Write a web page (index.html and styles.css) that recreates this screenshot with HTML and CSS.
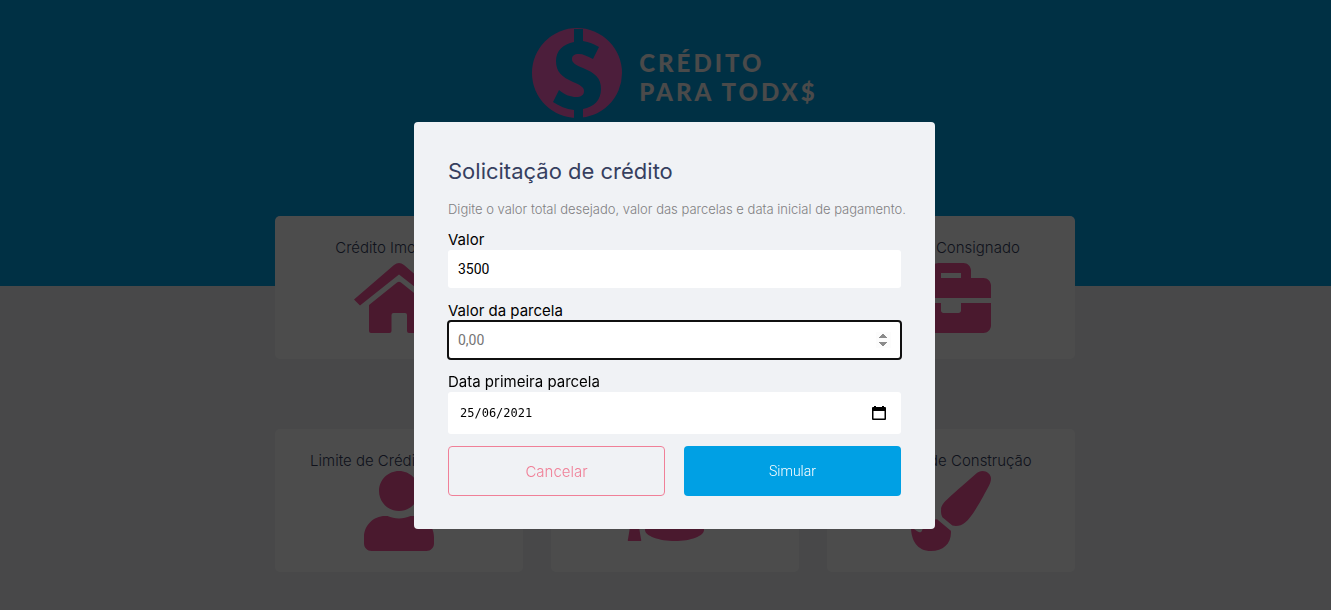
FILE: index.html
```html
<!DOCTYPE html>
<html lang="pt-BR">
<head>
<meta charset="utf-8">
<meta name="viewport" content="width=device-width, initial-scale=1">
<title>Crédito para Todxs</title>
<link rel="stylesheet" href="styles.css">
</head>
<body>
<header class="header">
  <div class="logo">
    <svg class="logo-mark" viewBox="0 0 92 92" aria-hidden="true">
      <circle cx="46" cy="46" r="45"/>
      <path class="logo-cut" d="M43 2h9v12c6 1 11 3 16 6l-6 12c-6-3-10-5-14-5-5 0-7 2-7 5 0 4 4 6 11 9 12 5 18 10 18 21 0 11-7 18-18 20v12h-9v-11c-8-1-15-4-21-8l6-12c6 5 12 7 17 7 5 0 8-2 8-6s-4-6-11-9c-11-5-17-10-17-21 0-10 7-17 18-19z"/>
    </svg>
    <p class="logo-text">CRÉDITO<br>PARA TODX$</p>
  </div>
</header>
<main class="cards">
  <section class="card">
    <h2 class="card-title">Crédito Imobiliário</h2>
    <svg class="card-icon" viewBox="0 0 90 80" aria-hidden="true"><path d="M0 41.500 40 7q5-4 10 0L90 41.500 84.500 47.500 45 16.500 6 47.500zM15 47 43 24.500q2-1.500 4 0L75 47v26q0 2-2 2H55q-2 0-2-2V57q0-2-2-2H39.500q-2 0-2 2v16q0 2-2 2H17q-2 0-2-2z"/></svg>
  </section>
  <section class="card">
    <h2 class="card-title">Crédito Veículo</h2>
  </section>
  <section class="card">
    <h2 class="card-title">Crédito Consignado</h2>
    <svg class="card-icon" viewBox="0 0 512 512" aria-hidden="true"><path d="M320 336c0 8.840-7.160 16-16 16h-96c-8.840 0-16-7.160-16-16v-48H0v144c0 25.600 22.400 48 48 48h416c25.600 0 48-22.400 48-48V288H320v48zm144-208h-80V80c0-25.600-22.400-48-48-48H176c-25.600 0-48 22.400-48 48v48H48c-25.600 0-48 22.400-48 48v80h512v-80c0-25.600-22.400-48-48-48zm-144 0H192V96h128v32z"/></svg>
  </section>
  <section class="card">
    <h2 class="card-title">Limite de Crédito Pessoal</h2>
    <svg class="card-icon" viewBox="0 0 448 512" aria-hidden="true"><path d="M224 256c70.700 0 128-57.300 128-128S294.700 0 224 0 96 57.300 96 128s57.300 128 128 128zm89.600 32h-16.700c-22.200 10.200-46.900 16-72.900 16s-50.600-5.800-72.900-16h-16.700C60.200 288 0 348.200 0 422.400V464c0 26.500 21.500 48 48 48h352c26.500 0 48-21.500 48-48v-41.600c0-74.200-60.200-134.400-134.400-134.400z"/></svg>
  </section>
  <section class="card">
    <h2 class="card-title">Crédito Estudantil</h2>
    <svg class="card-icon" viewBox="0 0 100 80" aria-hidden="true"><path d="M6 50h7l3 18q1 2-1 2H4q-2 0-1-2zM22 40h57v19c0 6-13 11-29 11S20 65 20 59z"/></svg>
  </section>
  <section class="card">
    <h2 class="card-title">Material de Construção</h2>
    <svg class="card-icon" viewBox="0 0 512 512" aria-hidden="true"><path d="M167.020 309.340c-40.120 2.580-76.530 17.860-97.190 72.300-2.350 6.210-8 9.980-14.590 9.980-11.110 0-45.460-27.670-55.250-34.350C0 439.620 37.930 512 128 512c75.860 0 128-43.770 128-120.190 0-3.110-.65-6.080-.97-9.130l-88.010-73.340zM457.890 0c-15.160 0-29.370 6.710-40.210 16.450C213.270 199.050 192 203.340 192 257.090c0 13.700 3.250 26.760 8.730 38.700l63.820 53.180c7.210 1.800 14.640 3.030 22.390 3.030 62.110 0 98.110-45.470 211.160-256.460 7.380-14.350 13.900-29.850 13.900-45.990C512 20.640 486 0 457.890 0z"/></svg>
  </section>
</main>
<div class="overlay">
  <form class="modal" role="dialog" aria-labelledby="modal-title">
    <h1 class="modal-title" id="modal-title">Solicitação de crédito</h1>
    <p class="modal-text">Digite o valor total desejado, valor das parcelas e data inicial de pagamento.</p>
    <div class="field">
      <label for="valor">Valor</label>
      <input class="input" id="valor" type="number" value="3500">
    </div>
    <div class="field">
      <label for="parcela">Valor da parcela</label>
      <input class="input input-spin" id="parcela" type="number" placeholder="0,00" autofocus>
    </div>
    <div class="field">
      <label for="data">Data primeira parcela</label>
      <div class="date">
        <input class="date-input" id="data" type="text" inputmode="numeric" value="25/06/2021">
        <button class="date-button" type="button" aria-label="Abrir calendário">
          <svg viewBox="0 0 14 15" aria-hidden="true"><path d="M2 0h2v1h6V0h2v1h1q1 0 1 1v11q0 1-1 1H1q-1 0-1-1V2q0-1 1-1h1zM1.500 5v7.500h11V5z"/></svg>
        </button>
      </div>
    </div>
    <div class="actions">
      <button class="button button-cancel" type="button">Cancelar</button>
      <button class="button button-submit" type="submit">Simular</button>
    </div>
  </form>
</div>
</body>
</html>
```
FILE: styles.css
```css
:root {
  --blue: #00a0e4;
  --surface: #f0f2f5;
  --pink: #f7559b;
  --title: #363f5f;
  --page-offset: 18px;
}

* {
  margin: 0;
  padding: 0;
  box-sizing: border-box;
}

body {
  height: 100vh;
  overflow: hidden;
  background: var(--surface);
  font-family: Inter, "Open Sans", sans-serif;
  font-size: 15px;
}

.header {
  height: 286px;
  padding: 27px 0 0 var(--page-offset);
  background: var(--blue);
}

.logo {
  display: flex;
  justify-content: center;
  align-items: center;
  gap: 16px;
}

.logo-mark {
  width: 92px;
  height: 92px;
  fill: #fd67c5;
}

.logo-cut {
  fill: var(--blue);
}

.logo-text {
  margin-top: 8px;
  color: #f7f7f7;
  font-family: Lato, sans-serif;
  font-size: 24px;
  font-weight: 900;
  line-height: 29px;
  letter-spacing: 3px;
}

.cards {
  display: grid;
  grid-template-columns: repeat(3, minmax(0, 248px));
  justify-content: center;
  gap: 70px 28px;
  margin-top: -70px;
  padding-left: var(--page-offset);
}

.card {
  display: flex;
  flex-direction: column;
  align-items: center;
  min-height: 143px;
  padding: 21px 0;
  border-radius: 5px;
  background: #fff;
}

.card-title {
  color: var(--title);
  font-size: 15px;
  font-weight: 300;
  line-height: 21px;
}

.card-icon {
  height: 80px;
  fill: var(--pink);
}

.overlay {
  position: fixed;
  inset: 0;
  display: flex;
  justify-content: center;
  align-items: flex-start;
  padding: 122px 0 0 var(--page-offset);
  background: rgba(0, 0, 0, 0.7);
}

.modal {
  width: 100%;
  max-width: 521px;
  padding: 34px 34px 33px;
  border-radius: 4px;
  background: var(--surface);
}

.modal-title {
  margin-bottom: 14px;
  color: var(--title);
  font-size: 22px;
  font-weight: 400;
  line-height: 30px;
}

.modal-text {
  margin-bottom: 11px;
  color: #808082;
  font-size: 13px;
  font-weight: 300;
  line-height: 18px;
  white-space: nowrap;
}

.field {
  display: flex;
  flex-direction: column;
  margin-bottom: 12px;
  line-height: 21px;
}

.input {
  width: 100%;
  height: 38px;
  padding: 0 10px;
  border: 0;
  border-radius: 3px;
  background: #fff;
  color: #000;
  font: 14px Roboto, sans-serif;
}

.input::placeholder {
  color: #757575;
}

.input:focus {
  outline: 2px solid #101010;
  outline-offset: -1px;
}

.input-spin::-webkit-inner-spin-button {
  opacity: 1;
}

.date {
  display: flex;
  align-items: center;
  height: 42px;
  padding: 0 15px 0 12px;
  border-radius: 3px;
  background: #fff;
}

.date-input {
  flex: 1;
  min-width: 0;
  border: 0;
  outline: 0;
  background: transparent;
  font: 12px "DejaVu Sans Mono", monospace;
}

.date-button {
  width: 14px;
  height: 15px;
  border: 0;
  background: transparent;
}

.date-button svg {
  display: block;
}

.actions {
  display: grid;
  grid-template-columns: 1fr 1fr;
  gap: 19px;
}

.button {
  height: 50px;
  border-radius: 4px;
  font-family: inherit;
  font-size: 15px;
  font-weight: 300;
}

.button-cancel {
  border: 1px solid #f08098;
  background: transparent;
  color: #f08098;
}

.button-submit {
  border: 0;
  background: var(--blue);
  color: #fff;
  font-family: Roboto, sans-serif;
  font-size: 14px;
}
```
